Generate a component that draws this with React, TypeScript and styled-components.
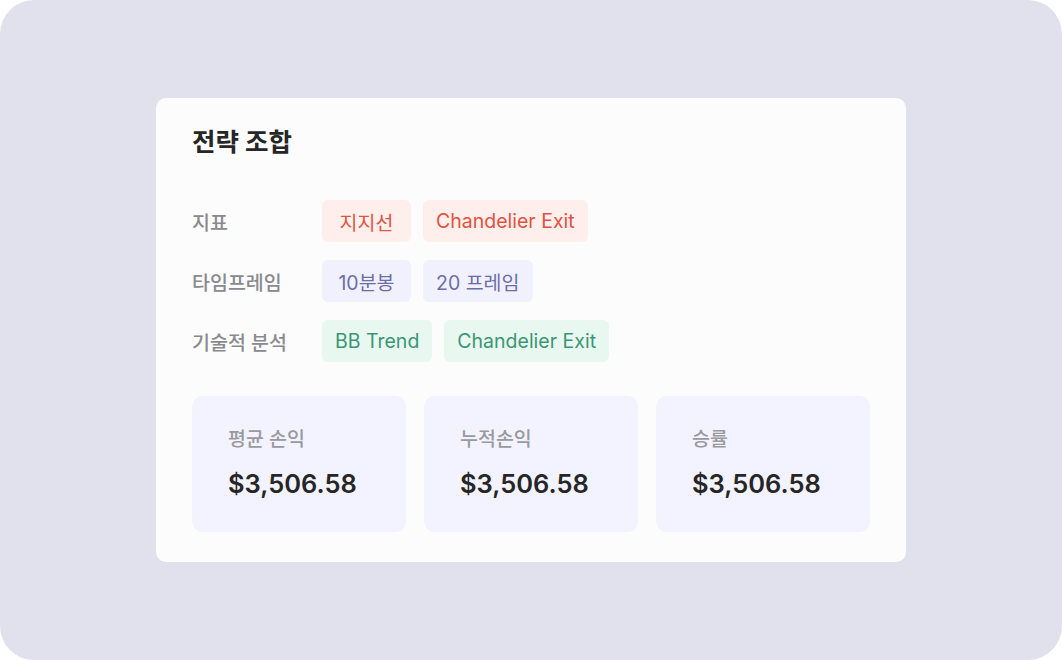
import React from "react";
import styled, { createGlobalStyle } from "styled-components";

const Global = createGlobalStyle`
  html, body { margin: 0; padding: 0; background: #ffffff; }
  body { font-family: Inter, "Noto Sans CJK KR", "Noto Sans", sans-serif; }
  * { box-sizing: border-box; }
`;

const Frame = styled.div`
  width: 1062px;
  height: 660px;
  border-radius: 34px;
  background: #e1e1ed;
  display: flex;
  align-items: center;
  justify-content: center;
`;

const Card = styled.section`
  width: 750px;
  background: #fcfcfd;
  border-radius: 10px;
  padding: 28px 36px 30px;
  display: flex;
  flex-direction: column;
`;

const Title = styled.h2`
  margin: 0 0 42px;
  font-size: 25.5px;
  line-height: 32px;
  font-weight: 700;
  color: #262626;
`;

const Rows = styled.div`
  display: flex;
  flex-direction: column;
  gap: 18px;
  margin-bottom: 34px;
`;

const Row = styled.div`
  display: flex;
  align-items: center;
`;

const Label = styled.div`
  width: 130px;
  font-size: 19.5px;
  font-weight: 500;
  color: #8a8a8e;
`;

const Chips = styled.div`
  display: flex;
  gap: 12px;
`;

type Tone = "red" | "blue" | "green";
const tones: Record<Tone, { bg: string; fg: string }> = {
  red: { bg: "#ffefec", fg: "#e0533f" },
  blue: { bg: "#f1f1fd", fg: "#6a6ea9" },
  green: { bg: "#e8f8f1", fg: "#3a9673" },
};

const Chip = styled.span<{ $tone: Tone }>`
  height: 42px;
  padding: 0 13px;
  min-width: 89px;
  display: inline-flex;
  align-items: center;
  justify-content: center;
  border-radius: 6px;
  font-size: 19.5px;
  background: ${(p) => tones[p.$tone].bg};
  color: ${(p) => tones[p.$tone].fg};
`;

const Stats = styled.div`
  display: grid;
  grid-template-columns: repeat(3, 1fr);
  gap: 18px;
`;

const Stat = styled.div`
  background: #f3f3ff;
  border-radius: 10px;
  padding: 31px 36px 32px;
  display: flex;
  flex-direction: column;
  gap: 17px;
`;

const StatLabel = styled.div`
  font-size: 19.5px;
  line-height: 24px;
  font-weight: 500;
  color: #9a9a9e;
`;

const StatValue = styled.div`
  font-size: 25.5px;
  line-height: 32px;
  font-weight: 600;
  color: #262626;
`;

const rows: { label: string; tone: Tone; chips: string[] }[] = [
  { label: "지표", tone: "red", chips: ["지지선", "Chandelier Exit"] },
  { label: "타임프레임", tone: "blue", chips: ["10분봉", "20 프레임"] },
  { label: "기술적 분석", tone: "green", chips: ["BB Trend", "Chandelier Exit"] },
];

const stats = [
  { label: "평균 손익", value: "$3,506.58" },
  { label: "누적손익", value: "$3,506.58" },
  { label: "승률", value: "$3,506.58" },
];

export default function App() {
  return (
    <>
      <Global />
      <Frame>
        <Card>
          <Title>전략 조합</Title>
          <Rows>
            {rows.map((r) => (
              <Row key={r.label}>
                <Label>{r.label}</Label>
                <Chips>
                  {r.chips.map((c) => (
                    <Chip key={c} $tone={r.tone}>
                      {c}
                    </Chip>
                  ))}
                </Chips>
              </Row>
            ))}
          </Rows>
          <Stats>
            {stats.map((s) => (
              <Stat key={s.label}>
                <StatLabel>{s.label}</StatLabel>
                <StatValue>{s.value}</StatValue>
              </Stat>
            ))}
          </Stats>
        </Card>
      </Frame>
    </>
  );
}
